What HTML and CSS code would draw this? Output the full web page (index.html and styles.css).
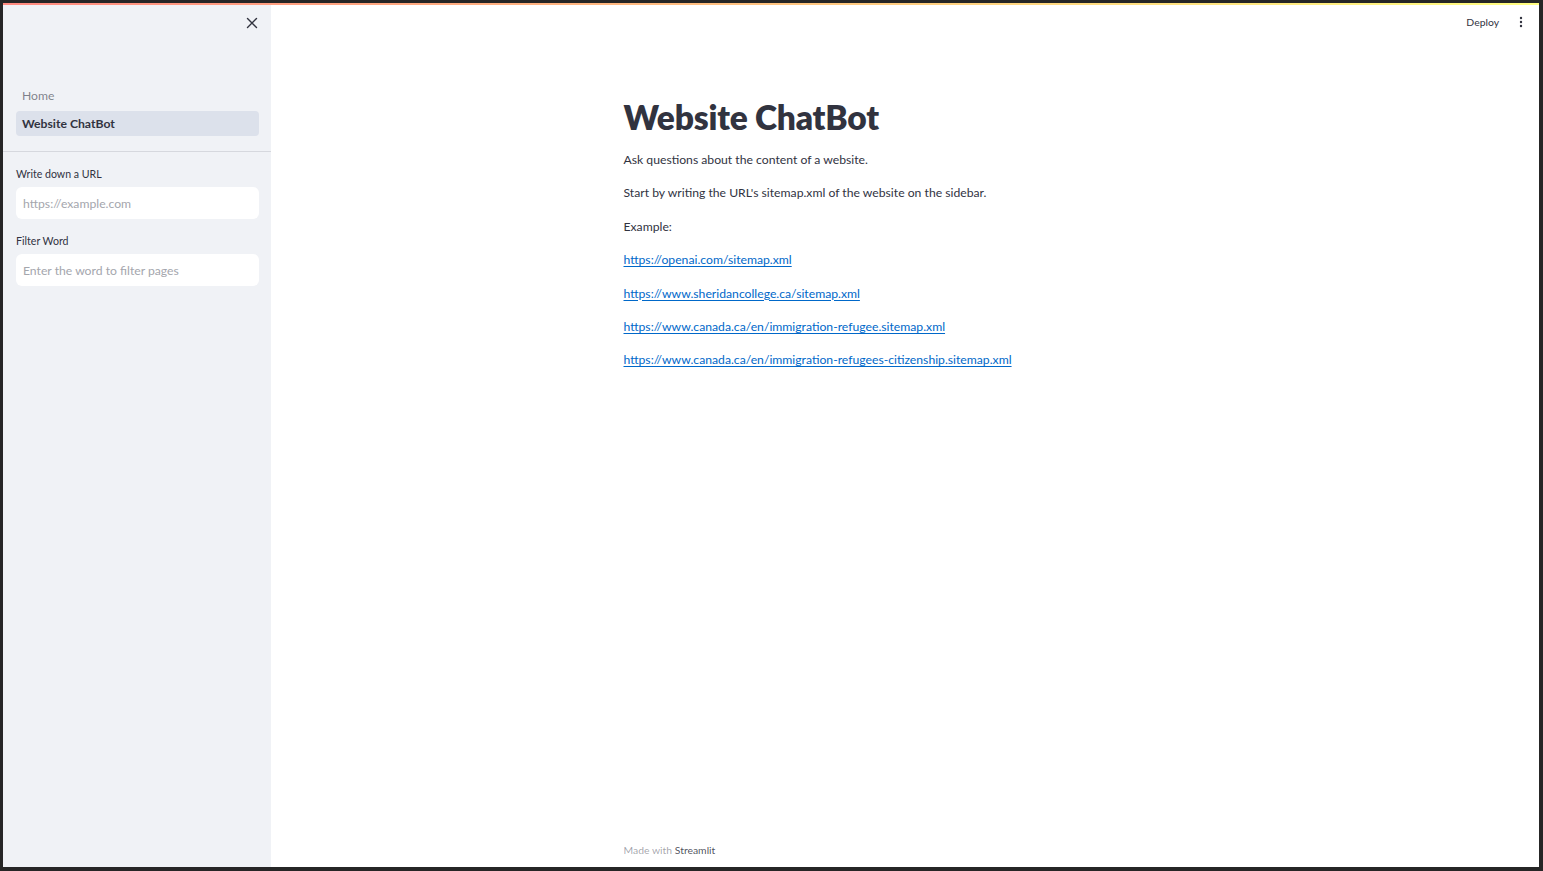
FILE: index.html
```html
<!DOCTYPE html>
<html lang="en">
<head>
<meta charset="utf-8">
<title>Website ChatBot</title>
<link rel="stylesheet" href="styles.css">
</head>
<body>
<div class="frame">
  <div class="app">
    <div class="decoration"></div>
    <div class="body-row">
      <aside class="sidebar">
        <div class="sidebar-header">
          <button class="close-btn" aria-label="Close sidebar">
            <svg width="12" height="12" viewBox="0 0 12 12"><path d="M1.5 1.5 L10.5 10.5 M10.5 1.5 L1.5 10.5" stroke="#31333f" stroke-width="1.4" stroke-linecap="round" fill="none"/></svg>
          </button>
        </div>
        <nav class="nav">
          <a class="nav-item">Home</a>
          <a class="nav-item active">Website ChatBot</a>
        </nav>
        <div class="divider"></div>
        <div class="sidebar-content">
          <div class="field">
            <label class="field-label">Write down a URL</label>
            <input class="field-input" type="text" placeholder="https://example.com">
          </div>
          <div class="field">
            <label class="field-label">Filter Word</label>
            <input class="field-input" type="text" placeholder="Enter the word to filter pages">
          </div>
        </div>
      </aside>
      <main class="main">
        <header class="toolbar">
          <span class="deploy">Deploy</span>
          <span class="kebab">
            <svg width="4" height="12" viewBox="0 0 4 12"><circle cx="2" cy="2" r="1.2" fill="#31333f"/><circle cx="2" cy="6" r="1.2" fill="#31333f"/><circle cx="2" cy="10" r="1.2" fill="#31333f"/></svg>
          </span>
        </header>
        <section class="content">
          <h1 class="title">Website ChatBot</h1>
          <p class="para">Ask questions about the content of a website.</p>
          <p class="para">Start by writing the URL's sitemap.xml of the website on the sidebar.</p>
          <p class="para">Example:</p>
          <p class="para"><a class="link" href="#">https://openai.com/sitemap.xml</a></p>
          <p class="para"><a class="link" href="#">https://www.sheridancollege.ca/sitemap.xml</a></p>
          <p class="para"><a class="link" href="#">https://www.canada.ca/en/immigration-refugee.sitemap.xml</a></p>
          <p class="para"><a class="link" href="#">https://www.canada.ca/en/immigration-refugees-citizenship.sitemap.xml</a></p>
        </section>
        <footer class="footer"><span class="made">Made with</span> <span class="brand">Streamlit</span></footer>
      </main>
    </div>
  </div>
</div>
</body>
</html>
```
FILE: styles.css
```css
* { box-sizing: border-box; }
html, body { margin: 0; height: 100%; }
body {
  background: #262626;
  font-family: "Lato", "Noto Sans", sans-serif;
  color: #31333f;
}
.frame {
  height: 871px;
  padding: 3px 4px 4px 3px;
}
.app {
  height: 100%;
  display: flex;
  flex-direction: column;
  background: #ffffff;
}
.decoration {
  height: 2px;
  flex: none;
  background: linear-gradient(90deg, #ff8a80, #fffd80);
}
.body-row {
  flex: 1;
  display: flex;
  min-height: 0;
}
.sidebar {
  width: 268px;
  flex: none;
  background: #f0f2f6;
  display: flex;
  flex-direction: column;
}
.sidebar-header {
  height: 72px;
  display: flex;
  justify-content: flex-end;
  align-items: flex-start;
  padding: 6px 7px 0 0;
}
.close-btn {
  width: 24px;
  height: 24px;
  border: none;
  background: transparent;
  display: flex;
  align-items: center;
  justify-content: center;
  padding: 0;
}
.nav {
  display: flex;
  flex-direction: column;
  gap: 3px;
  padding: 6px 12px 0 13px;
}
.nav-item {
  display: block;
  height: 25px;
  line-height: 25px;
  padding: 0 6px;
  border-radius: 4px;
  font-size: 12.2px;
  color: rgba(49, 51, 63, 0.6);
}
.nav-item.active {
  background: rgba(151, 166, 195, 0.22);
  color: #31333f;
  font-weight: 700;
}
.divider {
  height: 1px;
  background: #d6d8de;
  margin-top: 15px;
}
.sidebar-content {
  padding: 15px 12px 0 13px;
  display: flex;
  flex-direction: column;
  gap: 15px;
}
.field {
  display: flex;
  flex-direction: column;
  gap: 6px;
}
.field-label {
  font-size: 10.6px;
  line-height: 14px;
  color: #31333f;
}
.field-input {
  height: 32px;
  border: none;
  border-radius: 6px;
  background: #ffffff;
  padding: 0 7px;
  font-family: inherit;
  font-size: 12.2px;
  color: #31333f;
  outline: none;
}
.field-input::placeholder { color: #a4a6ad; }
.main {
  flex: 1;
  display: flex;
  flex-direction: column;
  position: relative;
}
.toolbar {
  position: absolute;
  top: 5px;
  right: 16px;
  display: flex;
  align-items: center;
  gap: 20px;
  height: 24px;
}
.deploy {
  font-size: 10.4px;
  color: #31333f;
}
.kebab {
  display: flex;
  align-items: center;
}
.content {
  width: 563px;
  margin: 0 auto;
  padding-top: 91px;
}
.title {
  margin: 0 0 12px 0;
  font-size: 33.5px;
  line-height: 42px;
  font-weight: 800;
  color: #31333f;
  letter-spacing: -0.2px;
}
.para {
  margin: 0 0 12.9px 0;
  font-size: 12.2px;
  line-height: 20.5px;
}
.link {
  color: #0068c9;
  text-decoration: underline;
  text-underline-offset: 2px;
}
.footer {
  margin-top: auto;
  width: 563px;
  margin-left: auto;
  margin-right: auto;
  padding-bottom: 9px;
  font-size: 10.4px;
  line-height: 16px;
}
.made { color: rgba(49, 51, 63, 0.45); }
.brand { color: rgba(49, 51, 63, 0.85); }
```
